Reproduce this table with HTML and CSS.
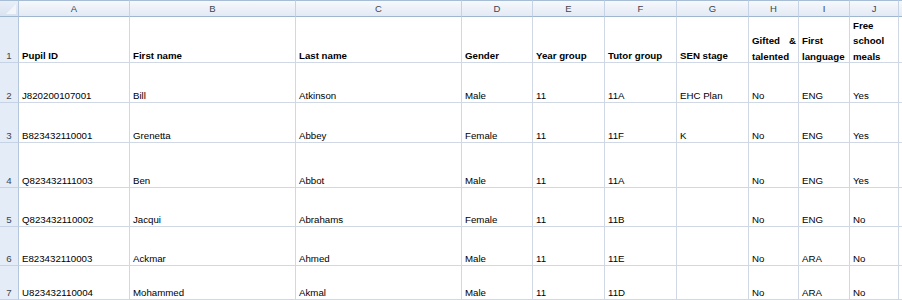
FILE: index.html
```html
<!DOCTYPE html>
<html>
<head>
<meta charset="utf-8">
<link rel="stylesheet" href="styles.css">
</head>
<body>
<div class="sheet">
  <div class="corner"><svg class="corner-tri" width="10" height="10" viewBox="0 0 10 10"><polygon points="10,0 10,10 0,10" fill="#f2f5fa"/></svg></div>
  <div class="colhdr">A</div><div class="colhdr">B</div><div class="colhdr">C</div><div class="colhdr">D</div><div class="colhdr">E</div><div class="colhdr">F</div><div class="colhdr">G</div><div class="colhdr">H</div><div class="colhdr">I</div><div class="colhdr">J</div><div class="colhdr"></div>

  <div class="rowhdr">1</div>
  <div class="cell bold">Pupil ID</div><div class="cell bold">First name</div><div class="cell bold">Last name</div><div class="cell bold">Gender</div><div class="cell bold">Year group</div><div class="cell bold">Tutor group</div><div class="cell bold">SEN stage</div><div class="cell bold"><span class="wrap justify">Gifted &amp; talented</span></div><div class="cell bold"><span class="wrap">First language</span></div><div class="cell bold"><span class="wrap">Free school meals</span></div><div class="cell"></div>

  <div class="rowhdr">2</div>
  <div class="cell">J820200107001</div><div class="cell">Bill</div><div class="cell">Atkinson</div><div class="cell">Male</div><div class="cell">11</div><div class="cell">11A</div><div class="cell">EHC Plan</div><div class="cell">No</div><div class="cell">ENG</div><div class="cell">Yes</div><div class="cell"></div>

  <div class="rowhdr">3</div>
  <div class="cell">B823432110001</div><div class="cell">Grenetta</div><div class="cell">Abbey</div><div class="cell">Female</div><div class="cell">11</div><div class="cell">11F</div><div class="cell">K</div><div class="cell">No</div><div class="cell">ENG</div><div class="cell">Yes</div><div class="cell"></div>

  <div class="rowhdr">4</div>
  <div class="cell">Q823432111003</div><div class="cell">Ben</div><div class="cell">Abbot</div><div class="cell">Male</div><div class="cell">11</div><div class="cell">11A</div><div class="cell"></div><div class="cell">No</div><div class="cell">ENG</div><div class="cell">Yes</div><div class="cell"></div>

  <div class="rowhdr">5</div>
  <div class="cell">Q823432110002</div><div class="cell">Jacqui</div><div class="cell">Abrahams</div><div class="cell">Female</div><div class="cell">11</div><div class="cell">11B</div><div class="cell"></div><div class="cell">No</div><div class="cell">ENG</div><div class="cell">No</div><div class="cell"></div>

  <div class="rowhdr">6</div>
  <div class="cell">E823432110003</div><div class="cell">Ackmar</div><div class="cell">Ahmed</div><div class="cell">Male</div><div class="cell">11</div><div class="cell">11E</div><div class="cell"></div><div class="cell">No</div><div class="cell">ARA</div><div class="cell">No</div><div class="cell"></div>

  <div class="rowhdr">7</div>
  <div class="cell">U823432110004</div><div class="cell">Mohammed</div><div class="cell">Akmal</div><div class="cell">Male</div><div class="cell">11</div><div class="cell">11D</div><div class="cell"></div><div class="cell">No</div><div class="cell">ARA</div><div class="cell">No</div><div class="cell"></div>
</div>
</body>
</html>
```
FILE: styles.css
```css
* { box-sizing: border-box; }
html, body { margin: 0; padding: 0; background: #ffffff; }
body {
  font-family: "Liberation Sans", Arial, sans-serif;
  font-size: 9.7px;
  color: #000;
  overflow: hidden;
}
.sheet {
  display: grid;
  grid-template-columns: 19px 111px 166px 166px 71px 72px 72px 72px 50px 51px 49px 1fr;
  grid-template-rows: 17px 46px 40px 40px 45px 39px 39px 34px;
  width: 902px;
}
.corner {
  background: linear-gradient(#e9eff8, #d9e3f0);
  border-top: 1px solid #a7bcd5;
  border-right: 1px solid #b3c6dc;
  border-bottom: 1px solid #9eb6ce;
  display: flex;
  align-items: flex-end;
  justify-content: flex-end;
  padding: 0 2px 2px 0;
}
.corner-tri { display: block; }
.colhdr {
  background: linear-gradient(#f6f9fc, #e3eaf4);
  border-top: 1px solid #a7bcd5;
  border-right: 1px solid #c5d3e4;
  border-bottom: 1px solid #9eb6ce;
  color: #3b4452;
  font-size: 9.5px;
  display: flex;
  align-items: center;
  justify-content: center;
}
.rowhdr {
  background: #e4ecf7;
  border-right: 1px solid #b3c6dc;
  border-bottom: 1px solid #c5d3e4;
  color: #3b4452;
  display: flex;
  align-items: flex-end;
  justify-content: center;
  line-height: 12px;
}
.cell {
  border-right: 1px solid #d0d7e5;
  border-bottom: 1px solid #d0d7e5;
  display: flex;
  align-items: flex-end;
  padding: 0 2px 0 3px;
  line-height: 12px;
  overflow: hidden;
}
.bold { font-weight: bold; }
.wrap {
  display: block;
  line-height: 15.5px;
  margin-bottom: -2px;
}
.justify {
  width: 100%;
  text-align: justify;
}
```
